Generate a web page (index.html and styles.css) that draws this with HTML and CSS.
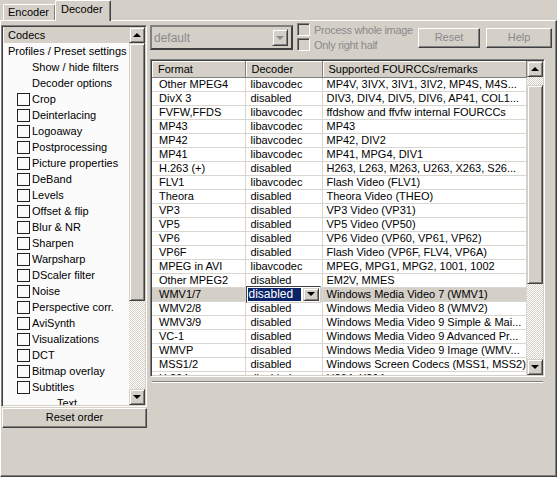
FILE: index.html
```html
<!DOCTYPE html>
<html lang="en">
<head>
    <meta charset="UTF-8">
    <title>ffdshow - Decoder</title>
    <link rel="stylesheet" href="styles.css">
</head>
<body>
    <div class="window">
        <div class="tabs">
            <div class="tab">Encoder</div>
            <div class="tab active">Decoder</div>
        </div>

        <div class="panel">
            <div class="side">
                <div class="listbox">
                    <ul class="tree">
                        <li class="sel">Codecs</li>
                        <li>Profiles / Preset settings</li>
                        <li class="sub">Show / hide filters</li>
                        <li class="sub">Decoder options</li>
                        <li class="chk"><span class="box"></span>Crop</li>
                        <li class="chk"><span class="box"></span>Deinterlacing</li>
                        <li class="chk"><span class="box"></span>Logoaway</li>
                        <li class="chk"><span class="box"></span>Postprocessing</li>
                        <li class="chk"><span class="box"></span>Picture properties</li>
                        <li class="chk"><span class="box"></span>DeBand</li>
                        <li class="chk"><span class="box"></span>Levels</li>
                        <li class="chk"><span class="box"></span>Offset &amp; flip</li>
                        <li class="chk"><span class="box"></span>Blur &amp; NR</li>
                        <li class="chk"><span class="box"></span>Sharpen</li>
                        <li class="chk"><span class="box"></span>Warpsharp</li>
                        <li class="chk"><span class="box"></span>DScaler filter</li>
                        <li class="chk"><span class="box"></span>Noise</li>
                        <li class="chk"><span class="box"></span>Perspective corr.</li>
                        <li class="chk"><span class="box"></span>AviSynth</li>
                        <li class="chk"><span class="box"></span>Visualizations</li>
                        <li class="chk"><span class="box"></span>DCT</li>
                        <li class="chk"><span class="box"></span>Bitmap overlay</li>
                        <li class="chk"><span class="box"></span>Subtitles</li>
                        <li class="sub2">Text</li>
                    </ul>
                    <div class="vscroll">
                        <div class="sb-btn up"></div>
                        <div class="thumb side-thumb"></div>
                        <div class="track"></div>
                        <div class="sb-btn down"></div>
                    </div>
                </div>
                <div class="btn reset-order">Reset order</div>
            </div>

            <div class="main">
                <div class="toolbar">
                    <div class="combo disabled">
                        <span class="combo-text">default</span>
                        <span class="combo-btn"><i class="arrow down-arrow grey"></i></span>
                    </div>
                    <div class="checks">
                        <div class="check"><span class="cbox"></span>Process whole image</div>
                        <div class="check"><span class="cbox"></span>Only right half</div>
                    </div>
                    <div class="buttons">
                        <div class="btn disabled reset">Reset</div>
                        <div class="btn disabled help">Help</div>
                    </div>
                </div>

                <div class="gridbox">
                    <div class="grid">
                        <table>
                            <colgroup>
                                <col class="c1"><col class="c2"><col class="c3">
                            </colgroup>
                            <thead>
                                <tr><th>Format</th><th>Decoder</th><th>Supported FOURCCs/remarks</th></tr>
                            </thead>
                            <tbody>
                                <tr><td>Other MPEG4</td><td>libavcodec</td><td>MP4V, 3IVX, 3IV1, 3IV2, MP4S, M4S...</td></tr>
                                <tr><td>DivX 3</td><td>disabled</td><td>DIV3, DIV4, DIV5, DIV6, AP41, COL1...</td></tr>
                                <tr><td>FVFW,FFDS</td><td>libavcodec</td><td>ffdshow and ffvfw internal FOURCCs</td></tr>
                                <tr><td>MP43</td><td>libavcodec</td><td>MP43</td></tr>
                                <tr><td>MP42</td><td>libavcodec</td><td>MP42, DIV2</td></tr>
                                <tr><td>MP41</td><td>libavcodec</td><td>MP41, MPG4, DIV1</td></tr>
                                <tr><td>H.263 (+)</td><td>disabled</td><td>H263, L263, M263, U263, X263, S26...</td></tr>
                                <tr><td>FLV1</td><td>libavcodec</td><td>Flash Video (FLV1)</td></tr>
                                <tr><td>Theora</td><td>disabled</td><td>Theora Video (THEO)</td></tr>
                                <tr><td>VP3</td><td>disabled</td><td>VP3 Video (VP31)</td></tr>
                                <tr><td>VP5</td><td>disabled</td><td>VP5 Video (VP50)</td></tr>
                                <tr><td>VP6</td><td>disabled</td><td>VP6 Video (VP60, VP61, VP62)</td></tr>
                                <tr><td>VP6F</td><td>disabled</td><td>Flash Video (VP6F, FLV4, VP6A)</td></tr>
                                <tr><td>MPEG in AVI</td><td>libavcodec</td><td>MPEG, MPG1, MPG2, 1001, 1002</td></tr>
                                <tr><td>Other MPEG2</td><td>disabled</td><td>EM2V, MMES</td></tr>
                                <tr class="selected">
                                    <td>WMV1/7</td>
                                    <td class="edit">
                                        <div class="cell-combo">
                                            <span class="cell-value">disabled</span>
                                            <span class="cell-btn"><i class="arrow down-arrow"></i></span>
                                        </div>
                                    </td>
                                    <td>Windows Media Video 7 (WMV1)</td>
                                </tr>
                                <tr><td>WMV2/8</td><td>disabled</td><td>Windows Media Video 8 (WMV2)</td></tr>
                                <tr><td>WMV3/9</td><td>disabled</td><td>Windows Media Video 9 Simple &amp; Mai...</td></tr>
                                <tr><td>VC-1</td><td>disabled</td><td>Windows Media Video 9 Advanced Pr...</td></tr>
                                <tr><td>WMVP</td><td>disabled</td><td>Windows Media Video 9 Image (WMV...</td></tr>
                                <tr><td>MSS1/2</td><td>disabled</td><td>Windows Screen Codecs (MSS1, MSS2)</td></tr>
                                <tr><td>H.264</td><td>disabled</td><td>H264, X264</td></tr>
                            </tbody>
                        </table>
                    </div>
                    <div class="vscroll">
                        <div class="sb-btn up"></div>
                        <div class="track gap"></div>
                        <div class="thumb grid-thumb"></div>
                        <div class="track"></div>
                        <div class="sb-btn down"></div>
                    </div>
                </div>
                <div class="etch"></div>
            </div>
        </div>
    </div>
</body>
</html>
```

FILE: styles.css
```css
body { margin: 0; font: 11px "Liberation Sans", Arial, sans-serif; color: #000; background: #d4d0c8; }
.window { width: 557px; height: 477px; background: #d4d0c8; overflow: hidden; }

/* tabs */
.tabs { display: flex; align-items: flex-end; height: 20px; padding-left: 3px; position: relative; z-index: 1; }
.tab { box-sizing: border-box; height: 16px; padding: 0 6px 0 4px; line-height: 15px; border: 1px solid #fff; border-right-color: #404040; border-bottom: none; box-shadow: inset -1px 0 #808080; border-radius: 2px 2px 0 0; }
.tab.active { height: 21px; margin: 0 0 -1px -1px; padding: 0 7px 0 5px; line-height: 17px; background: #d4d0c8; }

/* page frame */
.panel { box-sizing: border-box; height: 457px; display: flex; gap: 3px; padding: 4px 0 0 0; border: 1px solid #fff; border-right-color: #404040; border-bottom-color: #404040; box-shadow: inset -1px -1px #808080; }

/* common 3d bits */
.btn { box-sizing: border-box; height: 20px; line-height: 17px; text-align: center; background: #d4d0c8; border: 1px solid #fff; border-right-color: #404040; border-bottom-color: #404040; box-shadow: inset -1px -1px #808080; }
.btn.disabled { color: #8a8a8a; }

/* left tree */
.side { width: 146px; flex-shrink: 0; display: flex; flex-direction: column; }
.listbox { box-sizing: border-box; height: 382px; display: flex; background: #fbfbfb; border: 1px solid #808080; border-right-color: #fff; border-bottom-color: #fff; box-shadow: inset 1px 1px #404040, inset -1px -1px #d4d0c8; padding: 1px; }
.tree { flex: 1; margin: 0; padding: 0; list-style: none; overflow: hidden; }
.tree li { height: 16px; line-height: 16px; padding-left: 5px; white-space: nowrap; display: flex; align-items: center; }
.tree li.sel { background: #d4d0c8; margin: 0 0 0 1px; padding-left: 4px; }
.tree li.sub { padding-left: 29px; }
.tree li.sub2 { padding-left: 54px; }
.tree li.chk { padding-left: 14px; }
.box { box-sizing: border-box; width: 13px; height: 13px; border: 1px solid #222; margin-right: 2px; }
.reset-order { width: 145px; margin: 1px 0 0 1px; }

/* scrollbars */
.vscroll { width: 16px; flex-shrink: 0; display: flex; flex-direction: column; }
.track { flex: 1; background: repeating-conic-gradient(#fff 0 25%, #d4d0c8 0 50%) 0 0 / 2px 2px; }
.track.gap { flex: none; height: 8px; }
.sb-btn, .thumb { box-sizing: border-box; background: #d4d0c8; border: 1px solid #d4d0c8; border-right-color: #404040; border-bottom-color: #404040; box-shadow: inset 1px 1px #fff, inset -1px -1px #808080; }
.sb-btn { height: 16px; display: flex; align-items: center; justify-content: center; }
.sb-btn.up::after { content: ""; border: 4px solid transparent; border-top: none; border-bottom: 4px solid #000; margin-top: -1px; }
.sb-btn.down::after { content: ""; border: 4px solid transparent; border-bottom: none; border-top: 4px solid #000; }
.side-thumb { height: 258px; }
.grid-thumb { height: 199px; }

/* right side */
.main { width: 402px; flex-shrink: 0; display: flex; flex-direction: column; }
.toolbar { height: 34px; display: flex; align-items: flex-start; }
.combo { box-sizing: border-box; flex-shrink: 0; width: 143px; height: 25px; display: flex; align-items: center; padding: 0 3px 0 2px; border: 2px solid #808080; border-right-color: #404040; border-bottom-color: #404040; }
.combo-text { flex: 1; color: #8a8a8a; font-size: 12px; }
.combo-btn { box-sizing: border-box; width: 16px; height: 17px; display: flex; align-items: center; justify-content: center; border: 1px solid #d4d0c8; border-right-color: #404040; border-bottom-color: #404040; box-shadow: inset 1px 1px #fff, inset -1px -1px #808080; }
.arrow { display: block; border: 4px solid transparent; border-bottom: none; border-top: 4px solid #000; }
.arrow.grey { border-top-color: #8a8a8a; }

.checks { flex-shrink: 0; display: flex; flex-direction: column; gap: 2px; margin: -2px 0 0 4px; color: #8a8a8a; letter-spacing: -0.3px; }
.check { display: flex; align-items: center; height: 13px; white-space: nowrap; }
.cbox { box-sizing: border-box; width: 13px; height: 13px; margin-right: 4px; border: 1px solid #808080; border-right-color: #fff; border-bottom-color: #fff; box-shadow: inset 1px 1px #404040; }

.buttons { flex-shrink: 0; display: flex; gap: 6px; margin: 3px 0 0 auto; }
.btn.reset { width: 62px; }
.btn.help { width: 66px; }

/* codec list */
.gridbox { box-sizing: border-box; width: 395px; height: 318px; display: flex; padding: 1px; background: #fff; border: 1px solid #808080; border-right-color: #fff; border-bottom-color: #fff; box-shadow: inset 1px 1px #404040, inset -1px -1px #d4d0c8; }
.grid { flex: 1; overflow: hidden; }
.grid table { width: 375px; table-layout: fixed; border-collapse: collapse; }
.c1 { width: 93px; }
.c2 { width: 77px; }
th { box-sizing: border-box; height: 16px; padding: 0 0 0 6px; text-align: left; font-weight: normal; background: #d4d0c8; border-right: 1px solid #808080; border-bottom: 1px solid #808080; box-shadow: inset 1px 1px #fff; white-space: nowrap; overflow: hidden; }
td { height: 13px; line-height: 13px; padding: 0 0 0 5px; border-right: 1px solid #d8d6ce; border-bottom: 1px solid #d8d6ce; white-space: nowrap; overflow: hidden; }
td:first-child { padding-left: 7px; }
td:nth-child(3) { padding-left: 4px; }
tr.selected td { background: #d4d0c8; }
td.edit { position: relative; overflow: visible; padding: 0; }
.cell-combo { position: absolute; left: 0; top: -2px; box-sizing: border-box; width: 75px; height: 17px; display: flex; align-items: center; padding: 1px; background: #fff; border: 1px solid #404040; border-right-color: #d4d0c8; border-bottom-color: #d4d0c8; }
.cell-value { flex: 1; height: 13px; line-height: 13px; background: #0a246a; color: #fff; padding-left: 1px; font-size: 12px; margin-right: 2px; }
.cell-btn { box-sizing: border-box; width: 16px; height: 13px; display: flex; align-items: center; justify-content: center; background: #d4d0c8; border: 1px solid #d4d0c8; border-right-color: #404040; border-bottom-color: #404040; box-shadow: inset 1px 1px #fff, inset -1px -1px #808080; }

.etch { width: 391px; margin: 4px 0 0 2px; border-top: 1px solid #808080; border-bottom: 1px solid #fff; }
```
